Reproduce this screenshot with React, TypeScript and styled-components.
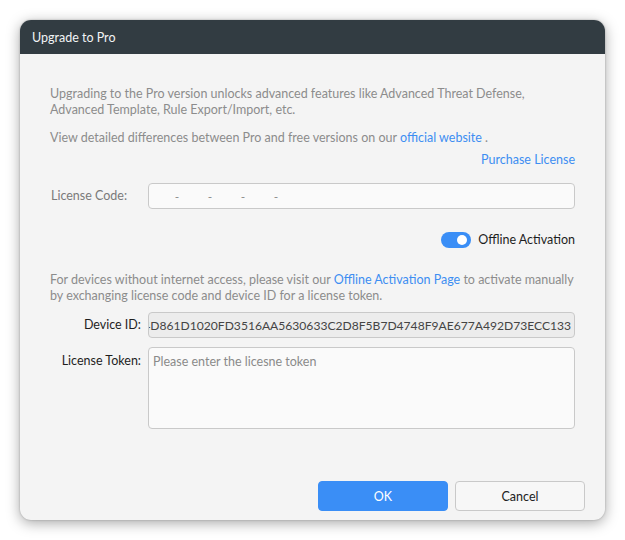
import React from "react";
import styled, { createGlobalStyle } from "styled-components";

const Global = createGlobalStyle`
  html, body { margin: 0; padding: 0; background: #ffffff; }
  body { font-family: Lato, "Noto Sans", sans-serif; font-size: 12.5px; }
  * { box-sizing: border-box; }
`;

const Page = styled.div`
  width: 625px;
  height: 540px;
  padding: 20px;
`;

const Dialog = styled.div`
  width: 585px;
  height: 500px;
  background: #f4f4f4;
  border-radius: 11px;
  overflow: hidden;
  box-shadow: 0 3px 14px rgba(0, 0, 0, 0.35), 0 0 2px rgba(0, 0, 0, 0.25);
  display: flex;
  flex-direction: column;
`;

const Header = styled.div`
  height: 34px;
  background: #323c42;
  color: #f2f4f5;
  display: flex;
  align-items: center;
  padding-left: 12px;
  font-size: 12.5px;
`;

const Body = styled.div`
  flex: 1;
  padding: 32px 30px 0 30px;
  display: flex;
  flex-direction: column;
`;

const Para = styled.p<{ $mt?: number }>`
  margin: ${(p) => p.$mt ?? 0}px 0 0 0;
  color: #8c8c8c;
  line-height: 16px;
  font-size: 12.5px;
  white-space: nowrap;
`;

const Link = styled.a`
  color: #3d8ef2;
  text-decoration: none;
`;

const RightRow = styled.div<{ $mt: number; $h?: number }>`
  margin-top: ${(p) => p.$mt}px;
  height: ${(p) => p.$h ?? 16}px;
  display: flex;
  justify-content: flex-end;
  align-items: center;
  gap: 7px;
  line-height: 16px;
`;

const FieldRow = styled.div<{ $mt: number; $top?: boolean }>`
  margin-top: ${(p) => p.$mt}px;
  display: flex;
  align-items: ${(p) => (p.$top ? "flex-start" : "center")};
  gap: 7px;
`;

const Label = styled.div<{ $right?: boolean; $muted?: boolean; $pt?: number }>`
  width: 91px;
  flex: none;
  text-align: ${(p) => (p.$right ? "right" : "left")};
  color: ${(p) => (p.$muted ? "#7a7a7a" : "#1e1e1e")};
  padding-left: ${(p) => (p.$right ? 0 : 1)}px;
  padding-top: ${(p) => p.$pt ?? 0}px;
  line-height: 16px;
  white-space: nowrap;
`;

const Input = styled.div<{ $disabled?: boolean }>`
  flex: 1;
  min-width: 0;
  height: 26px;
  border: 1px solid #c9c9c9;
  border-radius: 4px;
  background: ${(p) => (p.$disabled ? "#ececec" : "#fafafa")};
  display: flex;
  align-items: center;
  overflow: hidden;
`;

const CodeSegments = styled.div`
  display: flex;
  padding-left: 25px;
  gap: 27px;
  color: #8a8a8a;
  font-size: 12px;
`;

const Dash = styled.span`
  width: 6px;
  text-align: center;
`;

const DeviceText = styled.div`
  flex: 1;
  min-width: 0;
  display: flex;
  justify-content: flex-end;
  padding-right: 3px;
  white-space: nowrap;
  color: #444;
  font-size: 12.1px;
  overflow: hidden;
`;

const TextArea = styled.div`
  flex: 1;
  height: 82px;
  border: 1px solid #c9c9c9;
  border-radius: 4px;
  background: #fafafa;
  padding: 6px 4px;
  color: #8a8a8a;
  line-height: 16px;
`;

const Toggle = styled.div`
  width: 30px;
  height: 16px;
  border-radius: 8px;
  background: #3a8ef6;
  display: flex;
  align-items: center;
  justify-content: flex-end;
  padding-right: 4px;
`;

const Knob = styled.div`
  width: 10px;
  height: 10px;
  border-radius: 50%;
  background: #fff;
`;

const Dark = styled.span`
  color: #1e1e1e;
`;

const Footer = styled.div`
  display: flex;
  justify-content: flex-end;
  gap: 7px;
  padding: 0 20px 9px 0;
`;

const Button = styled.button<{ $primary?: boolean }>`
  width: 130px;
  height: 30px;
  border-radius: 4px;
  font-family: Lato, "Noto Sans", sans-serif;
  font-size: 12.5px;
  cursor: pointer;
  border: 1px solid ${(p) => (p.$primary ? "#3a8ef6" : "#c9c9c9")};
  background: ${(p) => (p.$primary ? "#3a8ef6" : "#f7f7f7")};
  color: ${(p) => (p.$primary ? "#ffffff" : "#222")};
`;

export default function App() {
  return (
    <Page>
      <Global />
      <Dialog>
        <Header>Upgrade to Pro</Header>
        <Body>
          <Para>
            Upgrading to the Pro version unlocks advanced features like Advanced Threat Defense,
            <br />
            Advanced Template, Rule Export/Import, etc.
          </Para>
          <Para $mt={12}>
            View detailed differences between Pro and free versions on our <Link>official website</Link> .
          </Para>
          <RightRow $mt={6}>
            <Link>Purchase License</Link>
          </RightRow>
          <FieldRow $mt={15}>
            <Label $muted>License Code:</Label>
            <Input>
              <CodeSegments>
                <Dash>-</Dash>
                <Dash>-</Dash>
                <Dash>-</Dash>
                <Dash>-</Dash>
              </CodeSegments>
            </Input>
          </FieldRow>
          <RightRow $mt={22} $h={18}>
            <Toggle>
              <Knob />
            </Toggle>
            <Dark>Offline Activation</Dark>
          </RightRow>
          <Para $mt={23}>
            For devices without internet access, please visit our <Link>Offline Activation Page</Link> to activate manually
            <br />
            by exchanging license code and device ID for a license token.
          </Para>
          <FieldRow $mt={8}>
            <Label $right>Device ID:</Label>
            <Input $disabled>
              <DeviceText>4D861D1020FD3516AA5630633C2D8F5B7D4748F9AE677A492D73ECC133</DeviceText>
            </Input>
          </FieldRow>
          <FieldRow $mt={9} $top>
            <Label $right $pt={6}>License Token:</Label>
            <TextArea>Please enter the licesne token</TextArea>
          </FieldRow>
        </Body>
        <Footer>
          <Button $primary>OK</Button>
          <Button>Cancel</Button>
        </Footer>
      </Dialog>
    </Page>
  );
}
